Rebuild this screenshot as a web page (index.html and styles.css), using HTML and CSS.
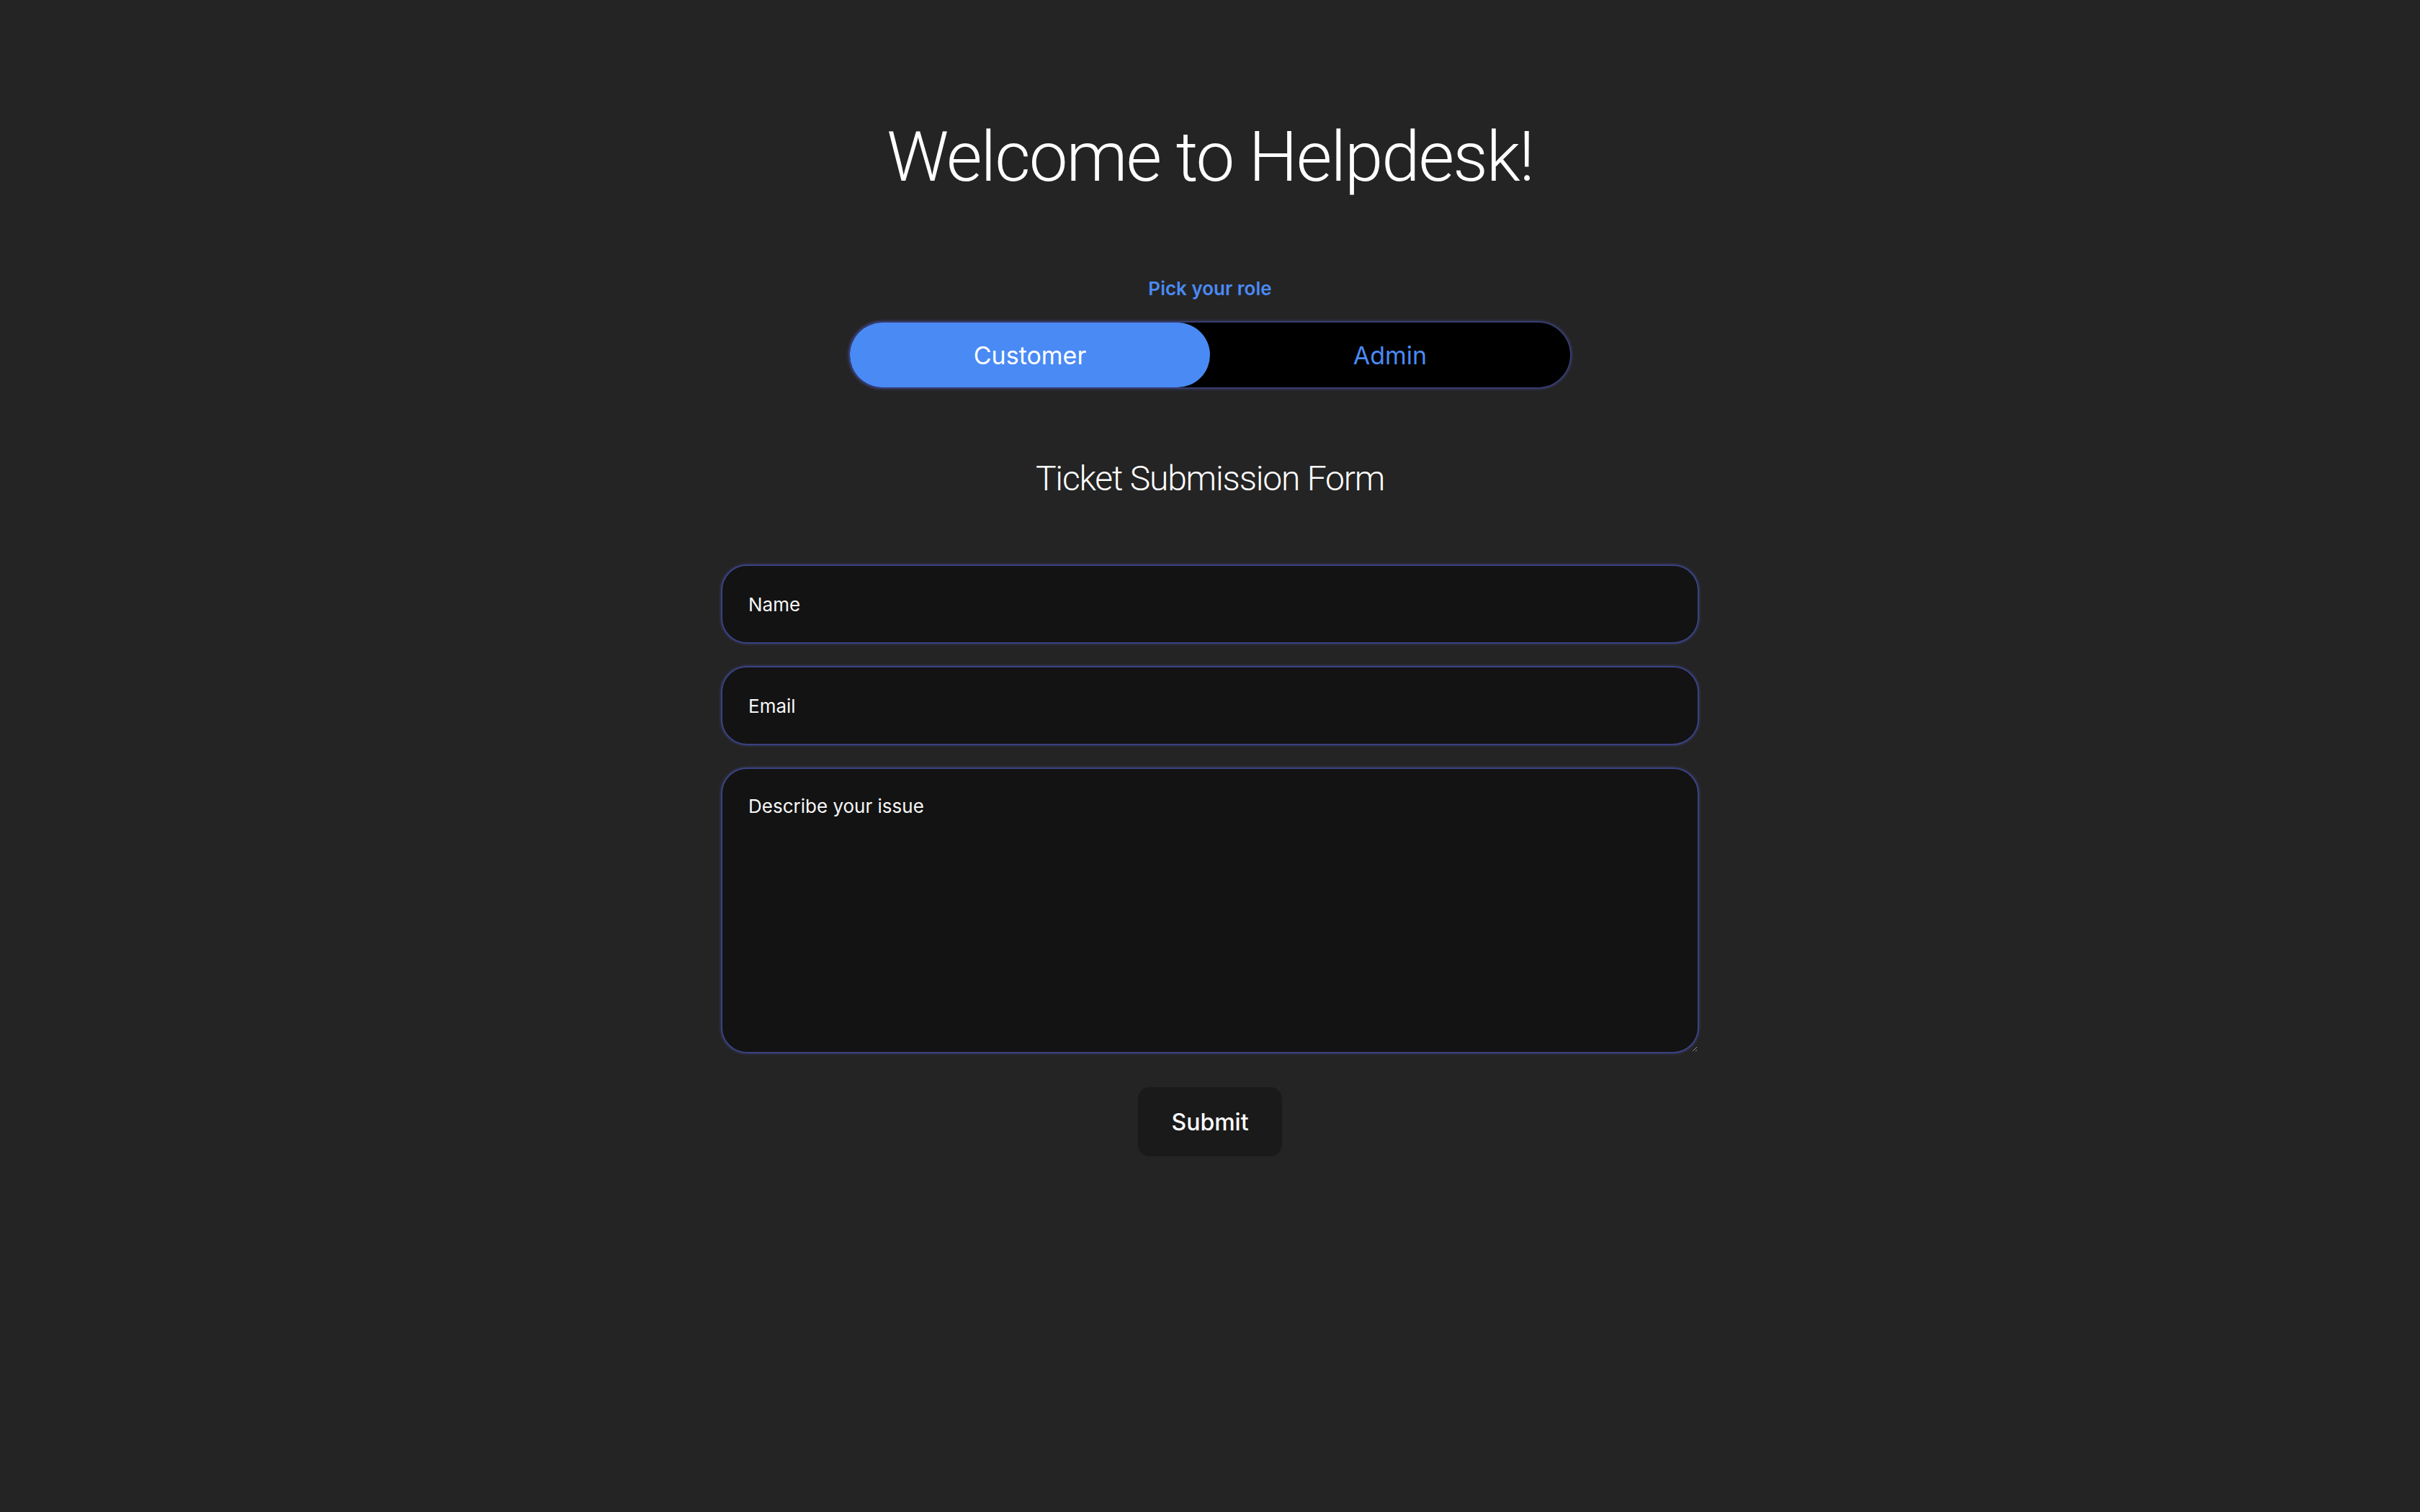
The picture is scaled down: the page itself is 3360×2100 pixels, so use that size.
FILE: index.html
```html
<!DOCTYPE html>
<html lang="en">
<head>
<meta charset="utf-8">
<title>Helpdesk</title>
<link rel="stylesheet" href="styles.css">
</head>
<body>
<main class="page">
  <h1 class="title">Welcome to Helpdesk!</h1>
  <p class="role-label">Pick your role</p>
  <div class="role-toggle">
    <button class="role-btn role-btn--active" type="button">Customer</button>
    <button class="role-btn" type="button">Admin</button>
  </div>
  <h2 class="form-title">Ticket Submission Form</h2>
  <form class="ticket-form">
    <input class="field" type="text" placeholder="Name">
    <input class="field" type="email" placeholder="Email">
    <textarea class="field field--area" placeholder="Describe your issue"></textarea>
    <button class="submit" type="button">Submit</button>
  </form>
</main>
</body>
</html>
```

FILE: styles.css
```css
* { box-sizing: border-box; }
html, body {
  margin: 0;
  padding: 0;
  background: #242424;
  min-height: 100vh;
}
body {
  font-family: Inter, "Noto Sans", "Liberation Sans", sans-serif;
  color: #ffffff;
}
.page {
  display: flex;
  flex-direction: column;
  align-items: center;
  padding-top: 170px;
}
.title {
  margin: 0;
  font-family: Roboto, Inter, "Liberation Sans", sans-serif;
  font-size: 96px;
  line-height: 1;
  font-weight: 300;
  letter-spacing: -2px;
}
.role-label {
  margin: 122px 0 0;
  font-size: 26px;
  line-height: 1;
  font-weight: 600;
  color: #4a8af4;
}
.role-toggle {
  margin-top: 32px;
  display: flex;
  width: 1004px;
  height: 94px;
  border: 2px solid #373c6e;
  border-radius: 47px;
  background: #000;
  box-shadow: 0 0 4px rgba(90, 100, 200, 0.45);
}
.role-btn {
  flex: 1;
  border: 0;
  margin: 0;
  padding: 0;
  background: transparent;
  border-radius: 45px;
  font-family: inherit;
  font-size: 34px;
  font-weight: 400;
  color: #4a8af4;
  cursor: pointer;
}
.role-btn--active {
  background: #4a8af4;
  color: #ffffff;
}
.form-title {
  margin: 101px 0 0;
  font-family: Roboto, Inter, "Liberation Sans", sans-serif;
  font-size: 48px;
  line-height: 1;
  font-weight: 300;
  letter-spacing: -1.2px;
}
.ticket-form {
  margin-top: 95px;
  width: 1358px;
  display: flex;
  flex-direction: column;
  align-items: center;
  gap: 31px;
}
.field {
  width: 100%;
  height: 110px;
  padding: 0 36px;
  border: 2px solid #3a4282;
  border-radius: 36px;
  background: #131313;
  box-shadow: 0 0 4px rgba(90, 100, 200, 0.45);
  color: #ffffff;
  font-family: inherit;
  font-size: 26px;
  outline: none;
}
.field::placeholder {
  color: #f7f7f7;
  opacity: 1;
}
.field--area {
  height: 397px;
  padding: 36px 36px;
  line-height: 1.21;
  resize: vertical;
}
.submit {
  margin-top: 16px;
  width: 200px;
  height: 96px;
  border: 0;
  border-radius: 16px;
  background: #1a1a1a;
  color: #ffffff;
  font-family: inherit;
  font-size: 32px;
  font-weight: 500;
  cursor: pointer;
}
```
